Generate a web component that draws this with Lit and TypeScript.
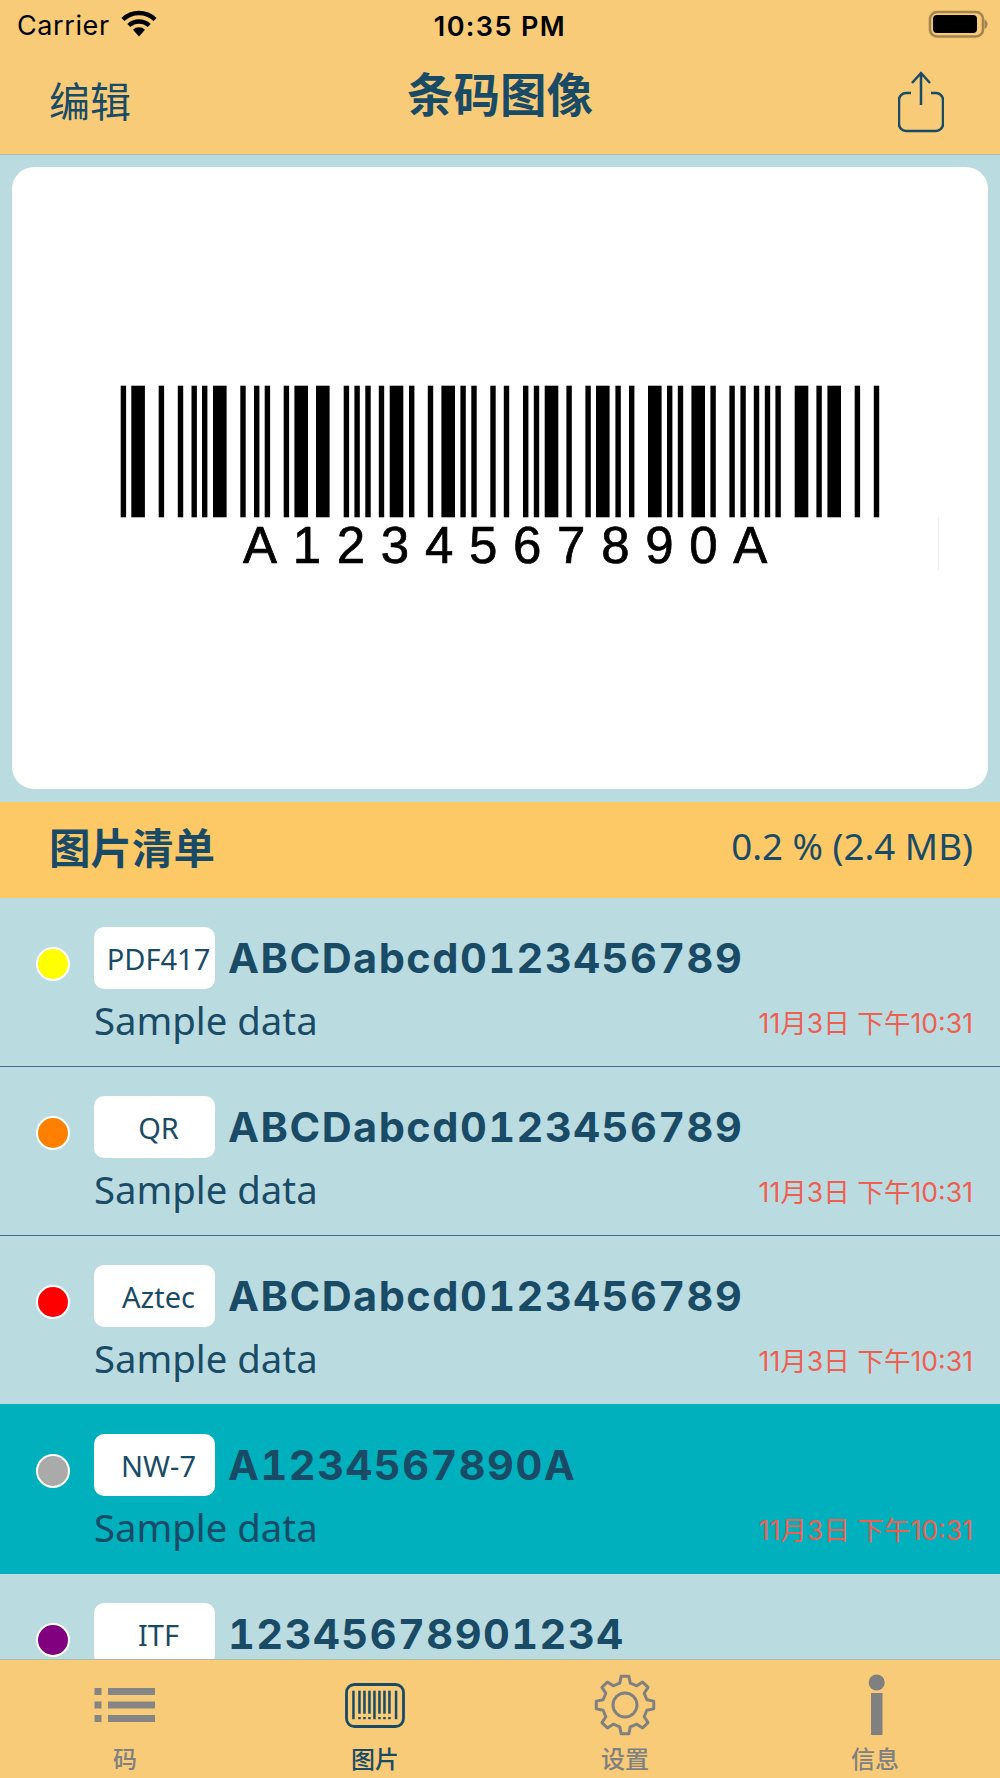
import { LitElement, html, css, svg } from "lit";
import { customElement } from "lit/decorators.js";

const BARS: [number, number][] = [
  [120.7,5.4],[131.3,13.6],[158.7,5.4],[177.8,5.4],[191.5,5.4],[202,5.4],[213,13.6],[240.3,5.4],[254,5.4],[264.7,5.4],
  [283.7,5.4],[294.4,13.6],[316,13.6],[343.7,5.4],[354.4,5.4],[365.3,5.4],[378.8,5.4],[389.7,13.6],[409,5.4],[427.8,5.4],
  [441.4,13.6],[460.4,5.4],[471.3,5.4],[490.3,5.4],[503.8,5.4],[523,5.4],[533.8,5.4],[544.7,13.6],[566.4,5.4],[585.4,5.4],
  [596,13.6],[615.4,5.4],[629,5.4],[648,13.6],[667,5.4],[677.8,5.4],[691.4,13.6],[710.4,5.4],[729.4,5.4],[740.4,5.4],
  [753.8,5.4],[764.8,5.4],[775.4,5.4],[794.7,13.6],[816.4,5.4],[827.4,13.6],[854.7,5.4],[873.8,5.4],
];

const ROWS = [
  { color: "#ffff00", tag: "PDF417", title: "ABCDabcd0123456789" },
  { color: "#ff8000", tag: "QR", title: "ABCDabcd0123456789" },
  { color: "#ff0000", tag: "Aztec", title: "ABCDabcd0123456789" },
  { color: "#aaaaaa", tag: "NW-7", title: "A1234567890A", selected: true },
  { color: "#800080", tag: "ITF", title: "12345678901234" },
];

function gearPath(cx: number, cy: number, ro: number, ri: number, teeth: number) {
  const pts: string[] = [];
  const step = (Math.PI * 2) / teeth;
  for (let i = 0; i < teeth; i++) {
    const a = -Math.PI / 2 + i * step;
    const p = (r: number, d: number) =>
      `${(cx + r * Math.cos(a + d)).toFixed(2)} ${(cy + r * Math.sin(a + d)).toFixed(2)}`;
    pts.push(p(ri, -step * 0.3), p(ro, -step * 0.17), p(ro, step * 0.17), p(ri, step * 0.3));
  }
  return "M" + pts.join("L") + "Z";
}

const TAB_BARS: [number, boolean][] = [
  [8.2, true],[14.2, false],[19.2, false],[24.2, false],[29.2, true],[34.2, false],[39.2, false],[44.2, false],[50.8, true],
];

@customElement("app-root")
export class AppRoot extends LitElement {
  static styles = css`
    :host {
      display: flex;
      flex-direction: column;
      width: 1000px;
      height: 1778px;
      overflow: hidden;
      background: #badce0;
      color: #1a4b66;
      font-family: "Noto Sans", "Noto Sans CJK SC", sans-serif;
    }
    .top {
      flex: none;
      height: 154px;
      background: #f7cb77;
      border-bottom: 1px solid #a9bfa8;
      display: flex;
      flex-direction: column;
    }
    .status {
      height: 50px;
      position: relative;
      display: flex;
      align-items: center;
      justify-content: center;
      color: #000;
      font-family: Inter, "Liberation Sans", sans-serif;
      font-size: 27px;
    }
    .carrier {
      position: absolute;
      left: 17px;
      top: 10px;
      line-height: 32px;
      letter-spacing: 0.6px;
    }
    .wifi {
      position: absolute;
      left: 121px;
      top: 10px;
    }
    .time {
      font-weight: 600;
      letter-spacing: 1.4px;
      margin-top: 2px;
    }
    .battery {
      position: absolute;
      left: 928px;
      top: 10px;
    }
    .nav {
      flex: 1;
      display: flex;
      align-items: center;
      justify-content: space-between;
      padding: 0 56px 0 49px;
      position: relative;
    }
    .edit {
      font-family: "Noto Sans CJK SC", sans-serif;
      font-size: 41px;
      line-height: 48px;
      margin-top: -6px;
    }
    .title {
      position: absolute;
      left: 0;
      right: 0;
      top: 0;
      text-align: center;
      font-family: "Noto Sans CJK SC", sans-serif;
      font-size: 46.5px;
      font-weight: 700;
      line-height: 68px;
      padding-top: 8px;
    }
    .card {
      flex: none;
      height: 622px;
      margin: 12px 12px 13px;
      background: #fff;
      border-radius: 22px;
      display: flex;
      align-items: flex-start;
      overflow: hidden;
    }
    .code {
      display: block;
      flex: none;
    }
    .code-text {
      font-family: "Liberation Sans", sans-serif;
      font-size: 51px;
      letter-spacing: 15.7px;
      fill: #000;
      stroke: #000;
      stroke-width: 0.7px;
    }
    .section {
      flex: none;
      height: 96px;
      background: #fcc966;
      display: flex;
      align-items: center;
      justify-content: space-between;
      padding: 0 27px 0 49px;
    }
    .section-title {
      font-family: "Noto Sans CJK SC", sans-serif;
      font-size: 41.5px;
      font-weight: 700;
      line-height: 48px;
      margin-top: -8px;
    }
    .section-info {
      font-size: 36.7px;
      line-height: 44px;
      margin-top: -8px;
    }
    .list {
      flex: 1;
      min-height: 0;
      overflow: hidden;
    }
    .row {
      height: 168px;
      border-bottom: 1px solid #3f6b85;
      display: flex;
      box-sizing: content-box;
    }
    .row.selected {
      background: #00b0bc;
      border-bottom-color: #00b0bc;
      box-shadow: 0 -1px 0 #00b0bc;
    }
    .dot {
      flex: none;
      width: 30px;
      height: 30px;
      border: 2px solid #fff;
      border-radius: 50%;
      margin: 49px 24px 0 36px;
    }
    .body {
      flex: 1;
      padding: 29px 27px 0 0;
      min-width: 0;
    }
    .line1 {
      display: flex;
      align-items: center;
      height: 62px;
    }
    .tag {
      flex: none;
      box-sizing: border-box;
      width: 121px;
      height: 62px;
      background: #fff;
      border-radius: 10px;
      padding-left: 8px;
      display: flex;
      align-items: center;
      justify-content: center;
      font-size: 29px;
    }
    .code-title {
      margin-left: 13px;
      font-family: Inter, "Liberation Sans", sans-serif;
      font-size: 41.5px;
      font-weight: 700;
      letter-spacing: 1.5px;
      font-variant-numeric: tabular-nums;
    }
    .line2 {
      display: flex;
      align-items: baseline;
      justify-content: space-between;
      margin-top: 5px;
      line-height: 52px;
    }
    .note {
      font-size: 38.3px;
    }
    .date {
      font-family: Inter, "Noto Sans CJK SC", sans-serif;
      font-size: 26.6px;
      color: #ee5f52;
      transform: translateY(-2px);
    }
    .tabs {
      flex: none;
      height: 118px;
      background: #f7cb77;
      border-top: 1px solid #a9bfa8;
      display: grid;
      grid-template-columns: repeat(4, 1fr);
    }
    .tab {
      display: flex;
      flex-direction: column;
      align-items: center;
      color: #808080;
    }
    .tab svg {
      display: block;
      flex: none;
      margin-top: 14px;
    }
    .tab.on {
      color: #1a4b66;
    }
    .tab span {
      font-family: "Noto Sans CJK SC", sans-serif;
      font-size: 24px;
      font-weight: 500;
      line-height: 30px;
      margin-top: 9px;
    }
    .tab .tall {
      margin-bottom: -2px;
    }
  `;

  private code() {
    return svg`
      ${BARS.map(([x, w]) => svg`<rect x=${x - 12} y=${385.7 - 167} width=${w} height="131.6" fill="#000"></rect>`)}
      <text class="code-text" x="231" y="395.6">A1234567890A</text>
      <rect x="926" y="350" width="1" height="53" fill="#eeeeee"></rect>
    `;
  }

  private tabIcon(i: number) {
    if (i === 0)
      return html`<svg width="62" height="60" viewBox="0 0 62 60" fill="#858585">
        <rect x="0.5" y="14" width="7" height="7"></rect><rect x="14" y="14" width="47" height="7"></rect>
        <rect x="0.5" y="27.5" width="7" height="7"></rect><rect x="14" y="27.5" width="47" height="7"></rect>
        <rect x="0.5" y="41" width="7" height="7"></rect><rect x="14" y="41" width="47" height="7"></rect>
      </svg>`;
    if (i === 1)
      return html`<svg width="62" height="60" viewBox="0 0 62 60" fill="#1a4b66">
        <rect x="2.5" y="10.5" width="57" height="42" rx="8" fill="none" stroke="#1a4b66" stroke-width="2.8"></rect>
        ${TAB_BARS.map(([x, long]) => svg`<rect x=${x} y="16.7" width="2.5" height=${long ? 28.5 : 23}></rect>`)}
        ${TAB_BARS.filter((b) => !b[1]).map(([x]) => svg`<rect x=${x} y="43" width="2.5" height="2.2"></rect>`)}
      </svg>`;
    if (i === 2)
      return html`<svg class="tall" width="62" height="62" viewBox="0 0 62 62" fill="none" stroke="#808080" stroke-width="3">
        <path d=${gearPath(31, 31, 29, 22.5, 8)} stroke-linejoin="round"></path>
        <circle cx="31" cy="31" r="12"></circle>
      </svg>`;
    return html`<svg class="tall" width="62" height="62" viewBox="0 0 62 62" fill="#808080">
      <circle cx="32.7" cy="8.5" r="8"></circle>
      <rect x="27" y="19" width="11.5" height="42"></rect>
    </svg>`;
  }

  render() {
    return html`
      <div class="top">
        <div class="status">
          <span class="carrier">Carrier</span>
          <svg class="wifi" width="36" height="28" viewBox="0 0 36 28" fill="none" stroke="#000" stroke-width="4.4">
            <path d="M2 9.5a23 23 0 0 1 32 0"></path>
            <path d="M7.8 15.5a15 15 0 0 1 20.4 0"></path>
            <path d="M18 26.5l-6-6.7a8.5 8.5 0 0 1 12 0z" fill="#000" stroke="none"></path>
          </svg>
          <span class="time">10:35 PM</span>
          <svg class="battery" width="60" height="30" viewBox="0 0 60 30">
            <rect x="2" y="2" width="53" height="24.5" rx="7" fill="none" stroke="#a5854f" stroke-width="2.6"></rect>
            <rect x="5" y="5" width="44" height="18" rx="4" fill="#000"></rect>
            <path d="M56.5 9.5c2 1 3 2.5 3 4.8s-1 3.8-3 4.7z" fill="#a5854f"></path>
          </svg>
        </div>
        <div class="nav">
          <span class="edit">编辑</span>
          <span class="title">条码图像</span>
          <svg width="46" height="62" viewBox="0 0 46 62" fill="none" stroke="#1a4b66" stroke-width="2.5">
            <path d="M13 22H8a7 7 0 0 0-7 7v24a7 7 0 0 0 7 7h30a7 7 0 0 0 7-7V29a7 7 0 0 0-7-7h-5"></path>
            <path d="M23 34V2M14 12l9-10 9 10"></path>
          </svg>
        </div>
      </div>
      <div class="card">
        <svg class="code" width="976" height="622" viewBox="0 0 976 622">${this.code()}</svg>
      </div>
      <div class="section">
        <span class="section-title">图片清单</span>
        <span class="section-info">0.2 % (2.4 MB)</span>
      </div>
      <div class="list">
        ${ROWS.map(
          (r) => html`<div class="row ${r.selected ? "selected" : ""}">
            <div class="dot" style="background:${r.color}"></div>
            <div class="body">
              <div class="line1">
                <div class="tag">${r.tag}</div>
                <div class="code-title">${r.title}</div>
              </div>
              <div class="line2">
                <span class="note">Sample data</span>
                <span class="date">11月3日 下午10:31</span>
              </div>
            </div>
          </div>`
        )}
      </div>
      <div class="tabs">
        ${["码", "图片", "设置", "信息"].map(
          (t, i) => html`<div class="tab ${i === 1 ? "on" : ""}">${this.tabIcon(i)}<span>${t}</span></div>`
        )}
      </div>
    `;
  }
}
